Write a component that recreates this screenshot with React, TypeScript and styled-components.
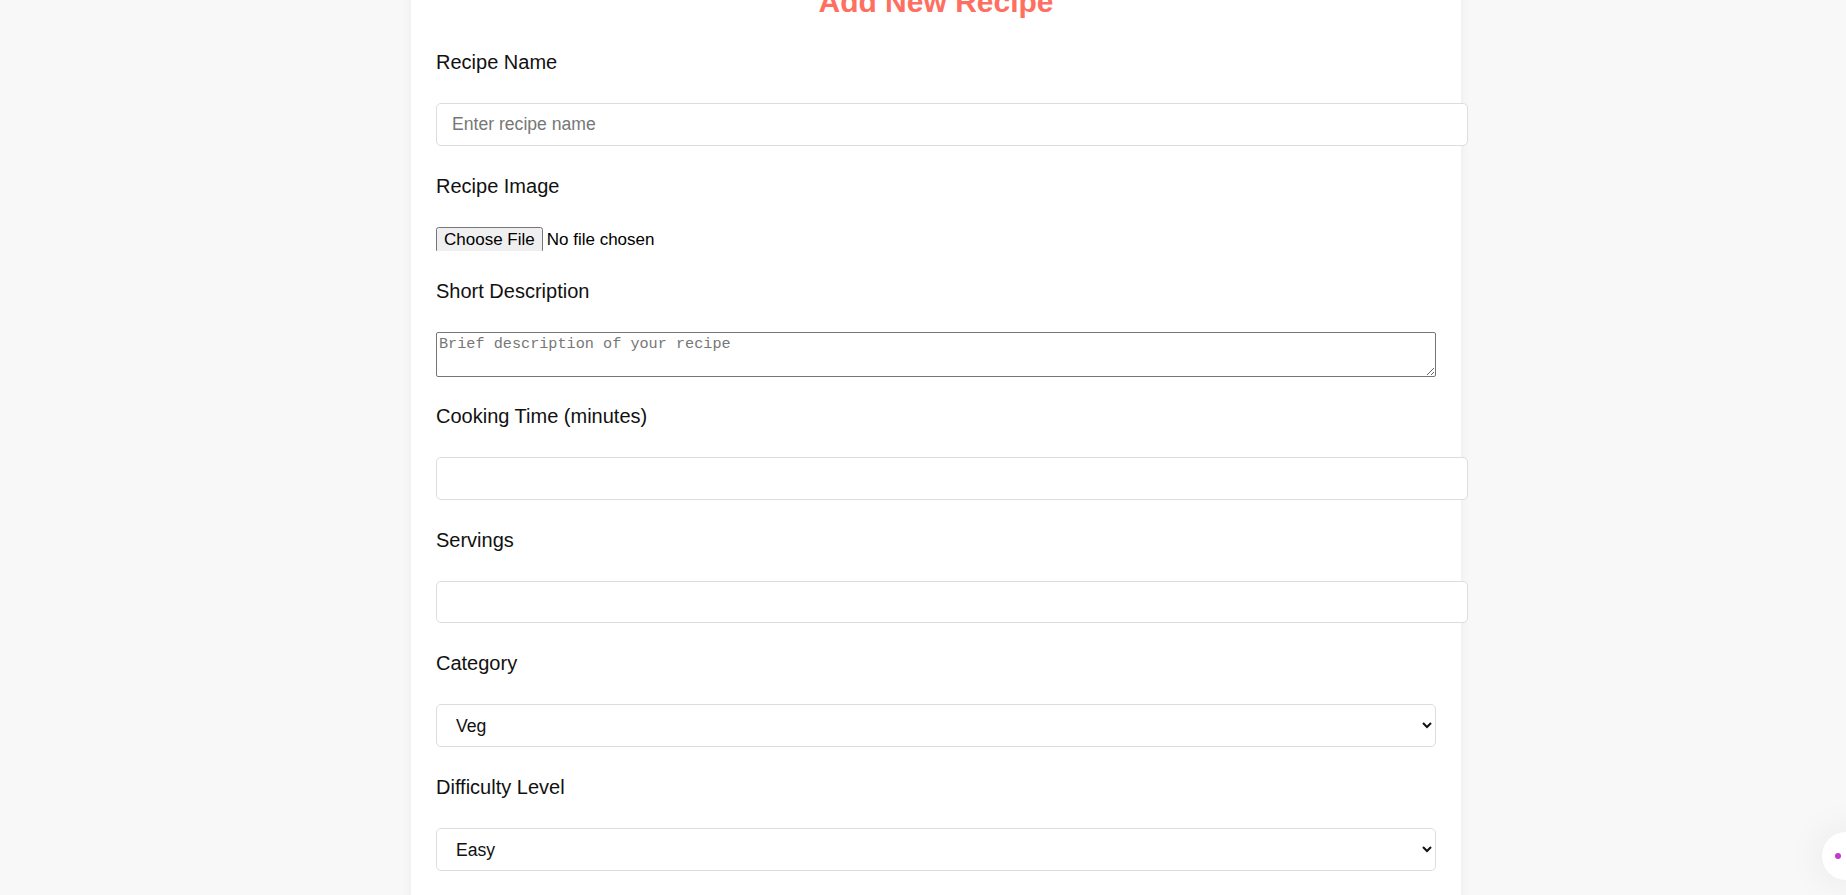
import React from "react";
import styled, { createGlobalStyle } from "styled-components";

const GlobalStyle = createGlobalStyle`
  html, body {
    margin: 0;
    padding: 0;
    background: #f8f8f8;
    font-family: "Liberation Sans", Arial, sans-serif;
    overflow: hidden;
  }
  * { box-sizing: border-box; }
`;

const Page = styled.div`
  padding-left: 26px;
  margin-top: -40px;
`;

const Card = styled.form`
  width: 1050px;
  margin: 0 auto;
  padding: 25px;
  background: #ffffff;
  box-shadow: 0 0 10px rgba(0, 0, 0, 0.06);
`;

const Title = styled.h2`
  margin: 0 0 32px;
  text-align: center;
  font-size: 30px;
  line-height: normal;
  font-weight: 700;
  color: #ff6f61;
`;

const Group = styled.div<{ $gap?: number }>`
  display: flex;
  flex-direction: column;
  align-items: flex-start;
  margin-bottom: ${(p) => p.$gap ?? 29}px;
`;

const Label = styled.label`
  display: block;
  font-size: 20px;
  line-height: 23px;
  color: #111;
  margin-bottom: 29.2px;
`;

const TextInput = styled.input`
  box-sizing: content-box;
  width: 100%;
  height: 20.4px;
  padding: 10px 15px;
  border: 1px solid #ddd;
  border-radius: 5px;
  font-family: "Liberation Sans", Arial, sans-serif;
  font-size: 17.6px;
  line-height: normal;
  color: #222;
  background: #fff;
  outline: none;
  &::placeholder { color: #777; }
`;

const FileInput = styled.input`
  display: block;
  height: 24.2px;
  font-family: "Liberation Sans", Arial, sans-serif;
  font-size: 17px;
  color: #000;
`;

const TextArea = styled.textarea`
  display: block;
  width: 100%;
  height: 45px;
  padding: 2px;
  border: 1px solid #767676;
  border-radius: 2px;
  font-family: "Liberation Mono", monospace;
  font-size: 15.2px;
  line-height: normal;
  color: #222;
  background: #fff;
  &::placeholder { color: #777; }
`;

const Select = styled.select`
  width: 100%;
  height: 43px;
  padding: 0 15px;
  border: 1px solid #ddd;
  border-radius: 5px;
  font-family: "Liberation Sans", Arial, sans-serif;
  font-size: 17.6px;
  color: #111;
  background: #fff;
  outline: none;
`;

const SubmitButton = styled.button`
  padding: 12px 24px;
  border: none;
  border-radius: 5px;
  background: #ff6f61;
  color: #fff;
  font-family: "Liberation Sans", Arial, sans-serif;
  font-size: 18px;
`;

const FloatingBubble = styled.div`
  position: fixed;
  right: -24px;
  bottom: 15px;
  width: 48px;
  height: 48px;
  border-radius: 50%;
  background: #fff;
  box-shadow: 0 0 40px rgba(0, 0, 0, 0.08);
  display: flex;
  align-items: center;
  padding-left: 12px;
`;

export default function App() {
  return (
    <>
      <GlobalStyle />
      <Page>
        <Card onSubmit={(e) => e.preventDefault()}>
          <Title>Add New Recipe</Title>
          <Group>
            <Label htmlFor="name">Recipe Name</Label>
            <TextInput id="name" type="text" placeholder="Enter recipe name" />
          </Group>
          <Group>
            <Label htmlFor="image">Recipe Image</Label>
            <FileInput id="image" type="file" />
          </Group>
          <Group $gap={27.8}>
            <Label htmlFor="desc">Short Description</Label>
            <TextArea id="desc" placeholder="Brief description of your recipe" />
          </Group>
          <Group>
            <Label htmlFor="time">Cooking Time (minutes)</Label>
            <TextInput id="time" type="number" />
          </Group>
          <Group>
            <Label htmlFor="servings">Servings</Label>
            <TextInput id="servings" type="number" />
          </Group>
          <Group>
            <Label htmlFor="category">Category</Label>
            <Select id="category" defaultValue="Veg">
              <option>Veg</option>
              <option>Non-Veg</option>
              <option>Dessert</option>
            </Select>
          </Group>
          <Group>
            <Label htmlFor="difficulty">Difficulty Level</Label>
            <Select id="difficulty" defaultValue="Easy">
              <option>Easy</option>
              <option>Medium</option>
              <option>Hard</option>
            </Select>
          </Group>
          <Group $gap={27.8}>
            <Label htmlFor="ingredients">Ingredients</Label>
            <TextArea id="ingredients" placeholder="List ingredients" />
          </Group>
          <SubmitButton type="submit">Add Recipe</SubmitButton>
        </Card>
      </Page>
      <FloatingBubble>
        <svg width="8" height="8" viewBox="0 0 8 8">
          <circle cx="4" cy="4" r="3" fill="#c23ac9" />
        </svg>
      </FloatingBubble>
    </>
  );
}
